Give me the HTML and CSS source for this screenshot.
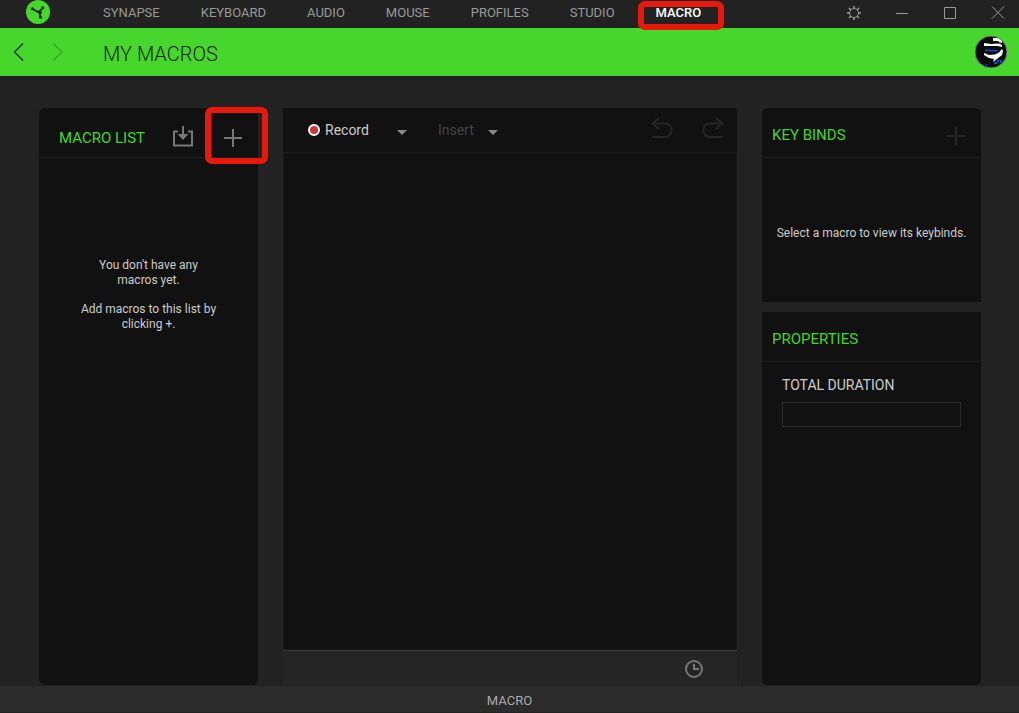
FILE: index.html
```html
<!DOCTYPE html>
<html lang="en">
<head>
<meta charset="utf-8">
<title>My Macros</title>
<link rel="stylesheet" href="styles.css">
</head>
<body>
<div class="app">
  <header class="topbar">
    <svg class="logo" viewBox="0 0 24 24" aria-hidden="true">
      <circle cx="12" cy="12" r="12" fill="#47d62c"/>
      <g fill="none" stroke="#162313" stroke-linecap="round" stroke-linejoin="round">
        <path d="M6.500 9 13 12.500 16.500 8M13.500 12.500 14.500 17" stroke-width="1.800"/>
        <path d="M6.300 8.800h.1M16.700 7.800h.1M14.600 17.200h.1" stroke-width="3"/>
      </g>
      <path d="M10 11l4-.5 2 2-1.500 2.500z" fill="#162313"/>
    </svg>
    <nav class="tabs">
      <a href="#">SYNAPSE</a>
      <a href="#">KEYBOARD</a>
      <a href="#">AUDIO</a>
      <a href="#">MOUSE</a>
      <a href="#">PROFILES</a>
      <a href="#">STUDIO</a>
      <a href="#" class="current">MACRO<span class="mark mark-tab"></span></a>
    </nav>
    <div class="window-buttons">
      <button aria-label="Settings"><svg width="16" height="16" viewBox="0 0 16 16"><circle cx="8" cy="8" r="4.500"/><path d="M8 1v2.500M8 12.500V15M1 8h2.500M12.500 8H15M3 3l1.800 1.800M11.200 11.200 13 13M3 13l1.800-1.800M11.200 4.800 13 3" stroke-width="1.600"/></svg></button>
      <button aria-label="Minimize"><svg width="16" height="16" viewBox="0 0 16 16"><path d="M2 8.500h12"/></svg></button>
      <button aria-label="Maximize"><svg width="16" height="16" viewBox="0 0 16 16"><path d="M2.500 2.500h11v11h-11z"/></svg></button>
      <button aria-label="Close"><svg width="16" height="16" viewBox="0 0 16 16"><path d="M2 1.500l12 12M14 1.500l-12 12"/></svg></button>
    </div>
  </header>

  <div class="titlebar">
    <div class="history">
      <button aria-label="Back"><svg width="12" height="20" viewBox="0 0 12 20"><path d="M10 1.500 1.500 10 10 18.500"/></svg></button>
      <button aria-label="Forward" disabled><svg width="12" height="20" viewBox="0 0 12 20"><path d="M1.500 1.500 10 10 1.500 18.500"/></svg></button>
    </div>
    <h1>MY MACROS</h1>
    <button class="avatar" aria-label="Account">
      <svg width="32" height="32" viewBox="0 0 32 32">
        <circle cx="16" cy="16" r="16" fill="#0b0c0e"/>
        <g stroke="none">
          <path d="M18 2h5l4 3v2l-3-1-1-1h-5zM9 7l7 1 8-.5 3 1.500v2l-4-1H9zM27 13l1 2-1 4-5 4-4 3 1-3-5-1-5-3v-2l5 2 6-.5 4-2z" fill="#fff"/>
          <path d="M10 13.500l12 .5v1.500l-12-.5zM22 24h2v2h-2zM19 26h3v2h-3zM25 24h2v3h-2zM11 28h1v3h-1z" fill="#0751df"/>
        </g>
      </svg>
    </button>
  </div>

  <main class="workspace">
    <section class="panel macro-list">
      <div class="panel-head">
        <h2>MACRO LIST</h2>
        <button class="import" aria-label="Import macro"><svg width="22" height="22" viewBox="0 0 22 22"><path d="M6 6.500H2v14h18v-14h-4" stroke-width="2"/><path d="M11 1v10" stroke-width="2"/><path d="M5.500 9h11L11 15z" fill="#777" stroke="none"/></svg></button>
        <button class="add" aria-label="Add macro"><svg width="18" height="18" viewBox="0 0 18 18"><path d="M9 0v18M0 9h18" stroke-width="2"/></svg><span class="mark mark-add"></span></button>
      </div>
      <div class="empty-list">
        <p>You don't have any macros yet.</p>
        <p>Add macros to this list by clicking +.</p>
      </div>
    </section>

    <section class="editor">
      <div class="toolbar">
        <button class="record"><span class="record-dot"></span>Record<span class="caret"></span></button>
        <button class="insert" disabled>Insert<span class="caret"></span></button>
        <button class="undo" aria-label="Undo" disabled><svg width="22" height="22" viewBox="0 0 22 22"><path d="M8 1 1.500 6.500 8 12M1.500 6.500H14a6.700 6.700 0 0 1 0 13.500H1" stroke-width="2"/></svg></button>
        <button class="redo" aria-label="Redo" disabled><svg width="22" height="22" viewBox="0 0 22 22"><path d="M14 1 20.500 6.500 14 12M20.500 6.500H8a6.700 6.700 0 0 0 0 13.500H21" stroke-width="2"/></svg></button>
      </div>
      <div class="canvas"></div>
      <div class="editor-foot">
        <button aria-label="Delays"><svg width="18" height="18" viewBox="0 0 18 18"><circle cx="9" cy="9" r="8" stroke-width="2"/><path d="M9 4v5h5" stroke-width="2"/></svg></button>
      </div>
    </section>

    <div class="side">
      <section class="panel keybinds">
        <div class="panel-head">
          <h2>KEY BINDS</h2>
          <button class="add" aria-label="Add key bind" disabled><svg width="18" height="18" viewBox="0 0 18 18"><path d="M9 0v18M0 9h18" stroke-width="2"/></svg></button>
        </div>
        <p>Select a macro to view its keybinds.</p>
      </section>
      <section class="panel properties">
        <div class="panel-head"><h2>PROPERTIES</h2></div>
        <div class="field">
          <label for="duration">TOTAL DURATION</label>
          <input id="duration" type="text">
        </div>
      </section>
    </div>
  </main>

  <footer class="statusbar">MACRO</footer>
</div>
</body>
</html>
```
FILE: styles.css
```css
* { box-sizing: border-box; }

body {
  margin: 0;
  background: #222;
  color: #ccc;
  font-family: Roboto, sans-serif;
  font-size: 12px;
}

h1, h2, p { margin: 0; }

button {
  display: flex;
  align-items: center;
  padding: 0;
  border: 0;
  background: none;
  color: inherit;
  font: inherit;
}

svg { display: block; flex: none; }
button svg { fill: none; stroke: #777; }

.app {
  display: flex;
  flex-direction: column;
  height: 100vh;
}

/* Top navigation */
.topbar {
  display: flex;
  flex: none;
  height: 28px;
  padding: 0 13px 0 26px;
}
.logo { width: 24px; height: 24px; }
.tabs {
  display: flex;
  gap: 41px;
  margin-left: 53px;
  font-size: 13px;
  line-height: 26px;
}
.tabs a {
  position: relative;
  color: #999;
  text-decoration: none;
}
.tabs .current { color: #fff; font-weight: 500; }
.window-buttons {
  display: flex;
  gap: 32px;
  height: 26px;
  margin-left: auto;
}
.window-buttons svg { stroke: #999; }

/* Red highlight frames drawn over the controls */
.mark {
  position: absolute;
  border: 6px solid #e8180c;
  border-radius: 7px;
  pointer-events: none;
}
.mark-tab { inset: 1px -23px -2px -18px; }
.mark-add { inset: -22px -26px -17px -19px; }

/* Green title bar */
.titlebar {
  display: flex;
  flex: none;
  align-items: center;
  height: 48px;
  padding: 0 12px 0 13px;
  background: #47d62c;
}
.history { display: flex; gap: 27px; width: 90px; }
.history svg { stroke: #222; stroke-width: 1.2; }
.history button:disabled { opacity: .3; }
.titlebar h1 {
  padding-top: 4px;
  color: #222;
  font: 300 20px/44px Roboto, sans-serif;
}
.avatar { margin-left: auto; }

/* Three-column workspace */
.workspace {
  display: grid;
  flex: 1;
  grid-template-columns: 219px 1fr 219px;
  gap: 25px;
  min-height: 0;
  padding: 32px 38px 0 39px;
}
.panel { background: #111; }
.panel-head {
  display: flex;
  height: 50px;
  align-items: center;
  border-bottom: 1px solid #1c1c1c;
}
.panel h2 {
  color: #44d62c;
  font-size: 15px;
  font-weight: 400;
  line-height: 20px;
  white-space: nowrap;
}

.macro-list { margin-bottom: 1px; border-radius: 6px; }
.macro-list .panel-head { padding: 10px 16px 0 20px; }
.import { margin: -4px 30px 0 auto; }
.macro-list .add { position: relative; }
.empty-list {
  display: grid;
  gap: 14px;
  padding: 100px 40px 0;
  line-height: 15px;
  text-align: center;
}

/* Editor */
.editor { display: flex; flex-direction: column; }
.toolbar {
  display: flex;
  align-items: center;
  height: 44px;
  padding: 0 13px 0 25px;
  background: #111;
  font-size: 14px;
}
.record-dot {
  width: 12px;
  height: 12px;
  margin-right: 5px;
  border: 2px solid #fff;
  border-radius: 50%;
  background: #d0343f;
}
.caret {
  border: 5px solid transparent;
  border-top-color: #888;
  border-bottom: 0;
}
.record .caret { margin: 4px 0 0 28px; }
.insert { margin-left: 31px; color: #444; }
.insert .caret { margin: 4px 0 0 14px; }
.undo, .redo { padding-bottom: 4px; }
.undo { margin-left: auto; }
.redo { margin-left: 29px; }
.undo svg, .redo svg, .keybinds svg { stroke: #262626; }
.canvas {
  flex: 1;
  border: 1px dotted #000;
  background: #111;
  outline: 1px solid #1a1a1a;
  outline-offset: -1px;
}
.editor-foot {
  display: flex;
  flex: none;
  justify-content: flex-end;
  height: 36px;
  padding-right: 34px;
  border-top: 1px solid #3a3a3a;
  background: #252525;
}

/* Right column */
.side { display: flex; flex-direction: column; gap: 10px; }
.side .panel-head { padding: 4px 16px 0 10px; }
.keybinds { height: 194px; border-radius: 6px 6px 0 0; }
.keybinds .add { margin: 2px 0 0 auto; }
.keybinds p { padding-top: 68px; line-height: 15px; text-align: center; }
.properties { flex: 1; margin-bottom: 1px; border-radius: 0 0 6px 6px; }
.field { display: grid; gap: 8px; padding: 15px 20px; }
.field label { font-size: 14px; line-height: 17px; }
.field input {
  width: 100%;
  height: 25px;
  border: 1px solid #2b2b2b;
  background: #111;
  color: #ccc;
}

.statusbar {
  flex: none;
  height: 27px;
  border-bottom: 1px solid #222;
  background: #2b2b2b;
  color: #aaa;
  font-size: 13px;
  line-height: 30px;
  text-align: center;
}
```
